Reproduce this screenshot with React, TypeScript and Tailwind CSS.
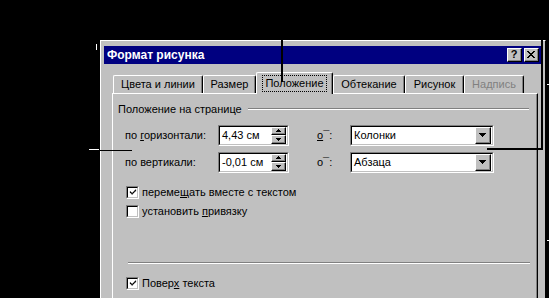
import React from "react";

function Raised({ className = "", children }: { className?: string; children?: React.ReactNode }) {
  return (
    <div className={`border-t border-l border-white border-r border-b border-r-black border-b-black bg-[#c0c0c0] ${className}`}>
      <div className="w-full h-full border-r border-b border-[#808080] flex items-center justify-center">
        {children}
      </div>
    </div>
  );
}

function Sunken({ className = "", children }: { className?: string; children?: React.ReactNode }) {
  return (
    <div className={`border-t border-l border-[#808080] border-r border-b border-r-white border-b-white ${className}`}>
      <div className="w-full h-full border-t border-l border-black border-r border-b border-r-[#c0c0c0] border-b-[#c0c0c0] bg-white flex items-center">
        {children}
      </div>
    </div>
  );
}

function Check({ checked, children }: { checked?: boolean; children: React.ReactNode }) {
  return (
    <div className="flex items-center h-[13px] pl-[13px]">
      <Sunken className="w-[13px] h-[13px]">
        {checked && (
          <svg width="9" height="9" viewBox="0 0 9 9" className="ml-[1px]">
            <path d="M1 3h1v1h1v1h1V4h1V3h1V2h1V1h1v2H7v1H6v1H5v1H4v1H3V6H2V5H1z" fill="#000" />
          </svg>
        )}
      </Sunken>
      <span className="ml-[3px] leading-none">{children}</span>
    </div>
  );
}

function Spin({ value }: { value: string }) {
  return (
    <Sunken className="w-[71px] h-[21px]">
      <span className="pl-[2px] flex-1">{value}</span>
      <div className="flex flex-col w-[15px] h-[17px] mr-[1px]">
        <Raised className="h-[8px] w-[15px]">
          <svg width="5" height="3" viewBox="0 0 5 3">
            <path d="M2 0h1v1h1v1h1v1H0V2h1V1h1z" fill="#000" />
          </svg>
        </Raised>
        <Raised className="h-[9px] w-[15px]">
          <svg width="5" height="3" viewBox="0 0 5 3">
            <path d="M0 0h5v1H4v1H3v1H2V2H1V1H0z" fill="#000" />
          </svg>
        </Raised>
      </div>
    </Sunken>
  );
}

function Combo({ value }: { value: string }) {
  return (
    <Sunken className="w-[144px] h-[21px]">
      <span className="pl-[2px] flex-1">{value}</span>
      <Raised className="w-[16px] h-[17px] mr-[1px]">
        <svg width="7" height="4" viewBox="0 0 7 4">
          <path d="M0 0h7v1H6v1H5v1H4v1H3V3H2V2H1V1H0z" fill="#000" />
        </svg>
      </Raised>
    </Sunken>
  );
}

const tabs = ["Цвета и линии", "Размер", "Положение", "Обтекание", "Рисунок", "Надпись"];
const tabWidths = ["w-[90px]", "w-[53px]", "w-[77px]", "w-[72px]", "w-[59px]", "w-[60px]"];

export default function App() {
  return (
    <div className="relative w-[549px] h-[298px] bg-black overflow-hidden font-['Liberation_Sans',Arial,sans-serif] text-[11px] text-black">
      {/* dialog window */}
      <div className="absolute left-[100px] top-[40px] w-[446px] h-[270px] bg-[#c0c0c0] border-t border-l border-white border-r border-r-black pt-[5px] pl-[3px] pr-[4px]">
        <div className="h-[18px] bg-[#000080] flex items-center pl-[3px] pr-[2px]">
          <span className="text-white font-bold text-[12px] flex-1 leading-none">Формат рисунка</span>
          <Raised className="w-[15px] h-[14px]">
            <span className="font-bold text-[11px] leading-none">?</span>
          </Raised>
          <Raised className="w-[15px] h-[14px] ml-[2px]">
            <svg width="8" height="7" viewBox="0 0 8 7">
              <path d="M0 0h2v1h1v1h2V1h1V0h2v1H7v1H6v1H5v1h1v1h1v1h1v1H6V6H5V5H3v1H2v1H0V6h1V5h1V4h1V3H2V2H1V1H0z" fill="#000" />
            </svg>
          </Raised>
        </div>

        {/* tabs */}
        <div className="flex items-end h-[21px] mt-[8px] ml-[9px] relative z-10">
          {tabs.map((t, i) =>
            i === 2 ? (
              <div
                key={t}
                className={`${tabWidths[i]} h-[22px] -mb-[1px] bg-[#c0c0c0] border-t border-l border-white border-r border-r-black rounded-t-[2px] shadow-[inset_-1px_0_0_#808080] flex items-start justify-center pt-[2px]`}
              >
                <span className="border border-dotted border-black h-[17px] px-[2px] flex items-center">{t}</span>
              </div>
            ) : (
              <div
                key={t}
                className={`${tabWidths[i]} h-[18px] bg-[#c0c0c0] border-t border-l border-white border-r border-r-black rounded-t-[2px] shadow-[inset_-1px_0_0_#808080] flex items-center justify-center ${i === 5 ? "text-[#808080]" : ""}`}
              >
                {t}
              </div>
            )
          )}
        </div>

        {/* tab panel */}
        <div className="ml-[8px] mr-[3px] h-[220px] border-t border-l border-white border-r border-r-black shadow-[inset_-1px_0_0_#808080]">
          <div className="flex items-center h-[14px] mt-[8px] pl-[5px] pr-[8px]">
            <span>Положение на странице</span>
            <div className="flex-1 ml-[6px] border-t border-[#808080] border-b border-b-white" />
          </div>

          <div className="flex items-center mt-[9px] pl-[12px]">
            <span className="w-[93px]">
              по <span className="underline">г</span>оризонтали:
            </span>
            <Spin value="4,43 см" />
            <span className="ml-[28px] w-[33px]">
              <span className="underline">о</span>¯:
            </span>
            <Combo value="Колонки" />
          </div>

          <div className="flex items-center mt-[6px] pl-[12px]">
            <span className="w-[93px]">по вертикали:</span>
            <Spin value="-0,01 см" />
            <span className="ml-[28px] w-[33px]">о¯:</span>
            <Combo value="Абзаца" />
          </div>

          <div className="mt-[13px]">
            <Check checked>
              переме<span className="underline">щ</span>ать вместе с текстом
            </Check>
          </div>
          <div className="mt-[6px]">
            <Check>
              установить <span className="underline">п</span>ривязку
            </Check>
          </div>

          <div className="mt-[44px] ml-[15px] mr-[7px] border-t border-[#808080] border-b border-b-white" />

          <div className="mt-[13px]">
            <Check checked>
              Повер<span className="underline">х</span> текста
            </Check>
          </div>
        </div>
      </div>

      {/* annotation lines */}
      <div className="absolute left-[281px] top-0 w-[2px] h-[82px] bg-black z-20" />
      <div className="absolute left-[541px] top-0 w-[2px] h-[150px] bg-black z-20" />
      <div className="absolute left-[487px] top-[148px] w-[56px] h-[2px] bg-black z-20" />
      <div className="absolute left-[100px] top-[150px] w-[32px] h-[1px] bg-black z-20" />

      {/* stray marks on the black page */}
      <div className="absolute left-[96px] top-[44px] w-[1px] h-[6px] bg-white" />
      <div className="absolute left-[89px] top-[149px] w-[10px] h-[1px] bg-white" />
      <div className="absolute left-[547px] top-[84px] w-[2px] h-[1px] bg-white" />
      <div className="absolute left-[547px] top-[240px] w-[2px] h-[1px] bg-white" />
    </div>
  );
}
